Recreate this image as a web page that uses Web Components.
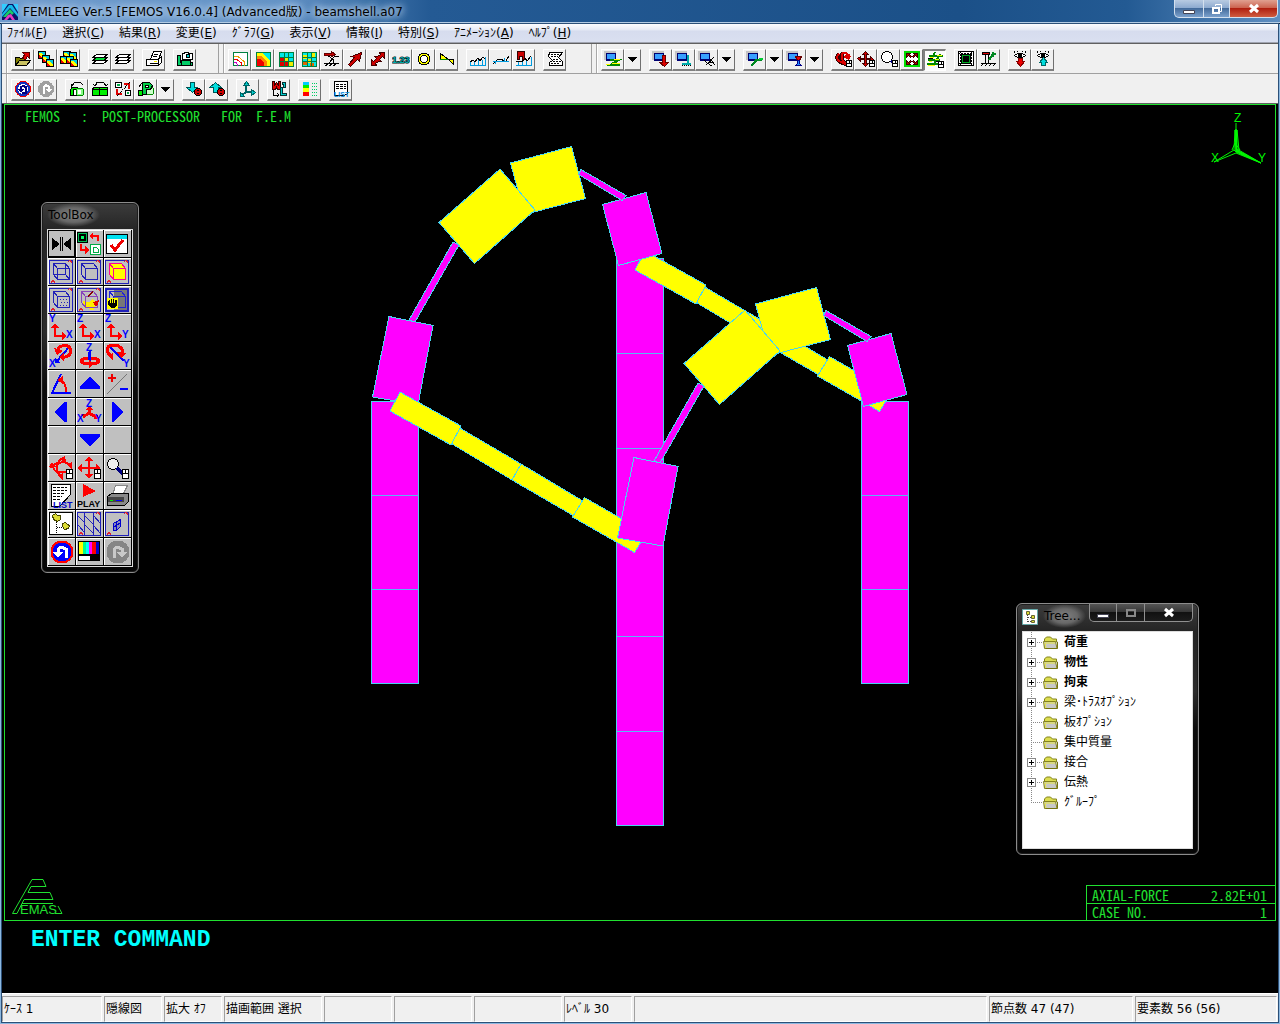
<!DOCTYPE html>
<html lang="ja">
<head>
<meta charset="utf-8">
<title>FEMLEEG Ver.5 [FEMOS V16.0.4] (Advanced版) - beamshell.a07</title>
<style>
  body {
    margin: 0;
    background: #000;
    font: 12px/16px "DejaVu Sans", "Noto Sans CJK JP", sans-serif;
    color: #000;
  }
</style>
</head>
<body>
<femos-app></femos-app>

<script>
// ---------- icon drawings ----------
const MONITOR = `<path fill="#c4c4c4" d="M0 0h12v9H0z"/><path fill="#000070" d="M2 2h10v8H2z"/><path fill="#38a0ff" d="M3 3h8v5H3z"/>`;
const MOUSE = `<path fill="#fff" stroke="#000" d="M12.5 9.5h5v6h-5zM12.5 12.5h5M15.5 9.5v3"/>`;
const CARD = `<path fill="#0cd" stroke="#000" d="M.5.5h7v7h-7z"/><path fill="#ff0" d="M1 2h2l4 4v1H1z"/><path fill="#e00" d="M1 4l3 3H1z"/>`;
const EYE = `<path fill="#fff" stroke="#000" d="M3.5 4.5l3-2h5l3 2-3 2h-5z"/><path fill="#000" d="M7 3h4v3H7zM3 0h1v2H3zM6 0h1v1H6zM11 0h1v1h-1zM14 0h1v2h-1z"/>`;
const GRID = `<path fill="#00e8e8" stroke="#008040" d="M2.5 1.5h14v14h-14z"/>`;
const GRIDLINES = `<path fill="none" stroke="#008040" d="M7.5 1v14M11.5 1v14M2 6.5h14M2 10.5h14"/>`;
const SHEETS = `<path stroke="#000" d="M1.5 12.5l4-3h11l-4 3z"/><path stroke="#000" d="M1.5 9.5l4-3h11l-4 3z"/><path stroke="#000" d="M1.5 6.5l4-3h11l-4 3z"/>`;

const ICONS = {
  open: `<path fill="#808000" stroke="#000" d="M1.5 14.5v-8h4l1 1h5v7z"/><path fill="#c8c060" stroke="#000" d="M1.5 14.5l4-5h11l-4 5z"/><path fill="#d00" stroke="#500" d="M8.5 7.5l2-4-2-2h7v6l-2-2-2 3z"/>`,
  cards: `<g transform="translate(1 0)">${CARD}</g><g transform="translate(5 4)">${CARD}</g><g transform="translate(9 8)">${CARD}</g>`,
  cardsAll: `<g transform="translate(3 0)">${CARD}</g><g transform="translate(9 1)">${CARD}</g><g transform="translate(0 5)">${CARD}</g><g transform="translate(6 5)">${CARD}</g><g transform="translate(10 8)">${CARD}</g>`,
  sheetGreen: `<g fill="#fff">${SHEETS}</g><path fill="#0d3" stroke="#000" d="M1.5 9.5l4-3h11l-4 3z"/>`,
  sheets: `<g fill="#fff">${SHEETS}</g>`,
  print: `<path fill="#fff" stroke="#000" d="M5.5 8.5l3-8h8l-3 8z"/><path fill="#fff" stroke="#000" d="M1.5 8.5h12v6h-12zM13.5 8.5l3-3v6l-3 3zM4.5 12.5h8"/><path stroke="#000" d="M9 3.5h4M8 5.5h4"/><path fill="#fe0" d="M9 10h3v1H9z"/>`,
  camera: `<path fill="#0c6" stroke="#000" d="M1.5 4.5h3v7h12v3h-15z"/><path fill="#0c6" stroke="#000" d="M5.5 9.5h9v5h-9z"/><path fill="#fff" stroke="#000" d="M6.5 2.5h2v-1h4v1h4v6h-10z"/><circle cx="12" cy="5" r="2" fill="#0cc" stroke="#000"/>`,
  contour: `<path fill="#fff" stroke="#008040" d="M2.5 1.5h14v13h-14z"/><path fill="none" stroke="#e8a000" d="M3 5.5h4l6 5v4"/><path fill="none" stroke="#e00" d="M3 8.5h3l4 3v3"/><path fill="none" stroke="#c0c" d="M3 11.5h2l2 3"/>`,
  contourFill: `${GRID}<path fill="#ff0" d="M3 2h5l8 8v5H3z"/><path fill="#f80" d="M3 5h4l6 6v4H3z"/><path fill="#e00" d="M3 8h3l4 4v3H3z"/>`,
  gridFill: `${GRID}<path fill="#d00" d="M3 7h4v8H3zM8 11h4v4H8z"/><path fill="#ee0" d="M8 7h4v4H8zM12 11h4v4h-4z"/>${GRIDLINES}`,
  gridNum: `${GRID}<path fill="#ee0" d="M3 4h4v4H3zM8 8h4v4H8zM12 2h3v4h-3z"/><path fill="#d60" d="M3 10h4v4H3zM10 12h4v3h-4z"/>${GRIDLINES}`,
  vecBase: `<path fill="none" stroke="#000" d="M1 12.5h15M2 15l3-2M6 15l3-2M10 15l3-2M6 12l6-7h4M5 4.5l5 4v4"/><path fill="#c00" stroke="#600" d="M1.5 2.5h7v-2l4 3-4 2v-1h-7z"/>`,
  arrow: `<path fill="#c00" stroke="#400" d="M2.5 13.5l6-7-3-1 10-4-2 9-2-2-7 7z"/>`,
  arrow2: `<path fill="#c00" stroke="#400" d="M15.5 1.5v6l-2-2-3 3 2 2h-3l-3 2 1 2h-5v-6l2 2 3-3-2-2h3l3-2-1-2z"/>`,
  num: `<text x="0" y="12" font-size="9" fill="#0aa" stroke="#000" stroke-width="1" paint-order="stroke">1.23</text>`,
  ring: `<circle cx="9" cy="8" r="6" fill="#ff0" stroke="#000"/><circle cx="9" cy="8" r="3.5" fill="#fff" stroke="#000"/>`,
  slope: `<path fill="#ff0" stroke="#000" d="M2.5 2.5v6h8z"/><path fill="none" stroke="#080" d="M2 8.5h14"/><path fill="#ff0" stroke="#000" d="M10.5 8.5h5v5z"/>`,
  wave: `<path fill="none" stroke="#009ce0" d="M1 14.5h16M1.5 14v-3M5.5 14v-4M9.5 14V9M13.5 14V9M16.5 14V6"/><path fill="none" stroke="#000" d="M1 11l3-2 2 2 3-4 2 3 3-4 2 2"/>`,
  curve: `<path fill="none" stroke="#000" d="M1 13l5-5h3l3 2h2l3-5"/><path fill="none" stroke="#009ce0" d="M1 10.5h16M3.5 13v-3M12.5 10V7"/>`,
  waveM: `<path fill="none" stroke="#009ce0" d="M1 14.5h16M3.5 14v-4M7.5 14v-4M11.5 14V9M16.5 14V6"/><path fill="none" stroke="#000" d="M1 11l3-1 3 1 3-4 2 3 4-5"/><path fill="#c00" stroke="#300" d="M2.5 8.5v-8h7v8h-2v-3h-3v3z"/>`,
  scroll: `<path fill="#fff" stroke="#000" d="M3.5 1.5h13l-4 5 4 4v4h-13v-3l3-2-4-4z"/><path stroke="#000" stroke-dasharray="2 1" d="M5 3.5h8M5 5.5h7M7 8.5h6M7 10.5h8M5 12.5h9"/>`,
  monZ: `${MONITOR}<path fill="none" stroke="#080" stroke-width="2" d="M6 9h9l-9 5h10"/><path fill="#ff0" d="M2 13h4v1H2zM8 12h8v1H8zM10 8h6v1h-6z"/>`,
  monRed: `${MONITOR}<path fill="#d00" stroke="#600" d="M10.5 4.5h3v7h3l-4 4-5-4h3z"/>`,
  monBase: `${MONITOR}<path stroke="#0aa" stroke-width="2" d="M13 4v9M7 13h9"/><path stroke="#000" stroke-dasharray="1 1" d="M7 14.5h10"/>`,
  monCut: `${MONITOR}<path fill="none" stroke="#000" d="M6 9l4 4 2-2M8 14l8-8M13 9l4 5M9 12l5 3M12 8v3h4"/>`,
  monY: `${MONITOR}<path fill="none" stroke="#082" stroke-width="2" d="M5 15l4-4 1-3M9 10l3-1h4"/><path fill="#0c3" d="M13 7h4v2h-4z"/>`,
  monHour: `${MONITOR}<path fill="#e00" stroke="#600" d="M9.5 5.5h6l-2 4h-2z"/><path fill="#28f" stroke="#008" d="M11.5 9.5h2v3l2 2h-6l2-2z"/>`,
  rotateM: `<path fill="none" stroke="#300" stroke-width="4" d="M5 3c-4 4-1 8 7 10M9 2c-3 4-1 8 3 11"/><path fill="none" stroke="#d00" stroke-width="2" d="M5 3c-4 4-1 8 7 10M9 2c-3 4-1 8 3 11M8 2h4l4 3"/><path fill="#d00" d="M9 6l4-3 4 2-2 4z"/>${MOUSE}`,
  panM: `<path fill="#c00" stroke="#400" d="M8.5.5l3 3h-2v4h4v-2l3 3-3 2v-2h-4v4h2l-3 3-3-3h2v-4h-4v2l-3-3 3-2v2h4v-4h-2z"/>${MOUSE}`,
  zoomM: `<circle cx="7" cy="6" r="5.5" fill="#fff" stroke="#000"/><path stroke="#000080" stroke-width="2" d="M11 10l4 4"/>${MOUSE}`,
  fit: `<path fill="#fff" stroke="#0d0" stroke-width="2" d="M2 1h14v14H2z"/><path fill="#a00" stroke="#300" d="M3.5 2.5h4l-1 1 2 2-1 1-2-2-2 2zM14.5 2.5v4l-2-2-2 2-1-1 2-2-1-1zM3.5 13.5v-4l2 2 2-2 1 1-2 2 1 1zM14.5 13.5h-4l1-1-2-2 1-1 2 2 2-2z"/>`,
  hatch: `<path stroke="#080" stroke-width="2" d="M3 4h14M2 8h12M1 12h11M9 0L5 8M14 2l-7 12"/><path stroke="#ff0" d="M4 5.5h4M11 3.5h5M3 9.5h3M9 7.5h4M2 13.5h7"/><path stroke="#000" d="M2 6.5h5M10 9.5h6"/>${MOUSE}`,
  target: `<path fill="#fff" stroke="#000" d="M1.5.5h15v14h-15z"/><path stroke="#000" stroke-dasharray="2 1" d="M1 2.5h16M1 12.5h16M3.5 0v15M14.5 0v15"/><path fill="#0a2" stroke="#000" d="M4.5 3.5h9v9h-9z"/><path d="M6 5h6v6H6z"/>`,
  support: `<path stroke="#000" d="M1 12.5h15M1 15l2-2M5 15l2-2M9 15l2-2M13 15l2-2M5.5 4v8M8.5 4v8M4 12.5h6"/><path fill="#d00" stroke="#000" d="M2.5 1.5h7v2h-7z"/><path fill="none" stroke="#082" stroke-width="2" d="M9 9l4-6h3M13 6V1"/>`,
  eyeDown: `${EYE}<path fill="#e00" stroke="#800" d="M7.5 7.5h4v3h2l-4 5-4-5h2z"/>`,
  eyeUp: `${EYE}<path fill="#0dd" stroke="#066" d="M9.5 6.5l4 5h-2v3h-4v-3h-2z"/>`,
  undo: `<circle cx="9" cy="8" r="8" fill="#e00"/><circle cx="9" cy="8" r="6" fill="#fff" stroke="#1030c0" stroke-width="2"/><path fill="none" stroke="#000080" stroke-width="2" d="M7 9V6l2-1 3 1v6H8"/><path fill="#000080" d="M4 8h6l-3 4z"/>`,
  redo: `<circle cx="9" cy="8" r="8" fill="#a0a0a0"/><path fill="none" stroke="#fff" stroke-width="2" d="M7 13V6l2-2 3 2v3"/><path fill="#fff" d="M9 8h6l-3 4z"/>`,
  turnG: `<path fill="none" stroke="#000" d="M4 5l3-4h5l3 3M3 3v3h3"/><path fill="#0e0" stroke="#000" d="M2.5 8.5l2-2h5v2h-4v6h-3z"/><path fill="#fff" stroke="#000" d="M5.5 8.5h3v6h-3z"/><circle cx="12" cy="11" r="4" fill="#8f8" stroke="#080"/><path fill="#fff" d="M10 9h3v4h-3z"/>`,
  turnGG: `<path fill="none" stroke="#000" d="M4 5l2-4h6l3 3M2 3l2 2 2-2M13 3l2 2 2-2"/><path fill="#0e0" stroke="#000" d="M1.5 8.5l1-2h14v8h-15zM8.5 7v8M2 8.5h14"/>`,
  swapCells: `<path fill="#fff" stroke="#000" d="M1.5 1.5h6v5h-6zM11.5 9.5h5v5h-5z"/><path fill="#0a4" d="M3 3h3v2H3zM13 11h2v2h-2z"/><path fill="none" stroke="#d00" stroke-width="2" d="M15 8V3h-5M3 8v5h5"/><path fill="none" stroke="#000" stroke-dasharray="1 1" d="M3 15L16 1"/>`,
  turnP: `<circle cx="13" cy="10" r="4" fill="#cfc" stroke="#080"/><path fill="#0c4" stroke="#000" d="M5.5 13.5v-12h7l3 3-2 4h-4v5z"/><path fill="#fff" stroke="#000" d="M8.5 4.5h3v2h-3z"/><path fill="#0e0" stroke="#000" d="M1.5 9.5h4v5h-4z"/><path fill="none" stroke="#000" d="M2 6l3-4"/>`,
  dropDown: `<path fill="#0dd" stroke="#055" d="M5.5 1.5h4v5h3l-5 5-6-5h4z"/><circle cx="13" cy="11" r="3.5" fill="#c00" stroke="#000"/><path fill="#000" d="M12 9h2v1h-2zM12 12h2v1h-2z"/>`,
  dropUp: `<path fill="#0dd" stroke="#055" d="M7.5 1.5l6 5h-3v5h-5v-5h-4z"/><circle cx="13" cy="11" r="3.5" fill="#c00" stroke="#000"/><path fill="#000" d="M12 9h2v1h-2zM12 12h2v1h-2z"/>`,
  axes: `<path fill="none" stroke="#066" stroke-width="2" d="M7 3v8h7M7 11l-4 3"/><path fill="#0cc" stroke="#066" d="M7.5.5l3 4h-6zM16.5 11.5l-4-3v6zM1.5 15.5v-4l4 4z"/>`,
  swapL: `<path fill="#d00" stroke="#300" d="M2.5.5h2v4l2-3 2 3v-4h2v8h-3l-1-2-1 2h-3z"/><path fill="#0cc" stroke="#033" d="M10.5 6.5h2v6h4v2h-6zM12.5 1.5h3v5h-2v-3h-1z"/><path fill="none" stroke="#000" d="M3.5 9v5h5M7 12l2 2-2 2"/>`,
  legend: `<path fill="#0cf" d="M2 1h6v3H2z"/><path fill="#0e0" d="M2 4h6v3H2z"/><path fill="#ff0" d="M2 7h6v4H2z"/><path fill="#f00" d="M2 11h6v4H2z"/><path stroke="#0c6" stroke-dasharray="1 1" d="M11 2.5h5M11 5.5h5M11 8.5h5M11 11.5h5M11 14.5h5"/>`,
  list: `<path fill="#fff" stroke="#000" d="M2.5.5h13v12l-3 2h-10z"/><path stroke="#000" stroke-dasharray="3 1" d="M4 3.5h10M4 5.5h10M4 7.5h10"/><text x="2" y="16" font-size="7" fill="#08d">LIST</text>`,
};

// frame that the view icons of the tool box share
const FRAME = `<path fill="none" stroke="#2020b8" d="M1.5 2.5h23v23h-23z"/><path fill="none" stroke="#e02030" d="M3 25l2-3 2 3M20 4l2-2 2 3"/>`;
const CUBE = `<path d="M9.5 10.5h12v11h-12zM9.5 10.5l-4-5h12l4 5M5.5 5.5v11l4 5"/>`;
const BOXMOUSE = `<path fill="#fff" stroke="#000" d="M18.5 15.5h6v9h-6zM18.5 19.5h6M21.5 15.5v4"/>`;
const L_ARROW = `<path fill="none" stroke="#f00" stroke-width="2" d="M7 12v10h9"/><path fill="#f00" d="M3 14l4-5 4 5zM14 18l5 4-5 4z"/>`;
const axisIcon = (a, b) => `${L_ARROW}<text x="1" y="8" font-size="10" fill="#00f">${a}</text><text x="18" y="24" font-size="10" fill="#00f">${b}</text>`;

const BOX_ICONS = {
  mirror: `<path fill="none" stroke="#000" d="M.5.5h26v26H.5z"/><path d="M4 8l8 6-8 6zM23 8l-8 6 8 6zM12 7h1v14h-1zM14 7h1v14h-1z"/>`,
  swap: `<path fill="#0b5" stroke="#000" stroke-width="1" d="M1.5 2.5h10v10h-10z"/><path d="M3 4h7v7H3z"/><path fill="#0f6" d="M5 6h3v3H5z"/><path fill="#fff" stroke="#0a4" d="M14.5 14.5h10v10h-10z"/><path fill="none" stroke="#0a4" d="M17.5 17.5h3l2 2v3h-5z"/><path fill="none" stroke="#f00" stroke-width="2" d="M22 11V6h-7M5 14v6h6"/><path fill="#f00" d="M13 6l4-4v8zM13 20l-4-4v8z"/>`,
  check: `<path fill="#fff" stroke="#000" d="M2.5 4.5h21v19h-21z"/><path fill="#00e0f0" d="M3 5h20v4H3z"/><path fill="none" stroke="#e00" stroke-width="3" d="M7 15l4 5 8-10"/>`,
  wire: `${FRAME}<g fill="none" stroke="#2020b8">${CUBE}<path d="M17.5 5.5v11h-12M17.5 16.5l4 5"/></g>`,
  hidden: `${FRAME}<g fill="none" stroke="#2020b8">${CUBE}</g>`,
  shaded: `<path fill="none" stroke="#2020b8" d="M1.5 2.5h23v23h-23z"/><path fill="#ff0" d="M5.5 5.5h12l4 5v11h-12l-4-5z"/><g fill="none" stroke="#f09">${CUBE}</g><path fill="none" stroke="#e02030" d="M3 25l2-3 2 3M20 4l2-2 2 3"/>`,
  dots: `${FRAME}<g fill="none" stroke="#2020b8">${CUBE}<path stroke-dasharray="1 2" d="M12 13.5h8M13 16.5h8M12 19.5h8"/></g>`,
  paint: `${FRAME}<path fill="#fe0" d="M7 15l6 1 3-3 4 4-2 7h-4l-2-3-4 1z"/><g fill="none" stroke="#84b">${CUBE}</g><path fill="#d00" d="M17 16l6-2-1 5-3 1z"/><path fill="#800" d="M11 10l5-5 1 1-5 5z"/>`,
  hand: `<path fill="#777" d="M10 2h15v23H10z"/><path fill="none" stroke="#2020b8" stroke-width="2" d="M2 3h22v22H2z"/><g fill="none" stroke="#2020d8">${CUBE}</g><path fill="#ff0" d="M3 12h11v11H3z"/><path d="M4 15l2-1v3h1v-4h1v4h1v-4h1v4h1v-3h2v5l-2 3H7l-3-4z"/>`,
  yx: axisIcon('Y', 'X'),
  zx: axisIcon('Z', 'X'),
  zy: axisIcon('Z', 'Y'),
  rotX: `<path stroke="#00f" stroke-width="2" d="M8 20L22 4"/><path fill="#00f" d="M7 21v-5l5 5z"/><path fill="none" stroke="#f00" stroke-width="3" d="M10 9c0-6 9-7 12-3 3 6-3 10-8 9"/><path fill="#f00" d="M6 6l3 7 6-4zM16 10v9l-5-4z"/><text x="1" y="25" font-size="10" fill="#00f">X</text>`,
  rotZ: `<path stroke="#00f" stroke-width="2" d="M14 9v13"/><ellipse cx="14" cy="19" rx="9" ry="3" fill="none" stroke="#f00" stroke-width="3"/><path fill="#00f" d="M12 10h3v8h-3z"/><path fill="#f00" d="M13 18l5 4-5 4z"/><text x="10" y="9" font-size="10" fill="#00f">Z</text>`,
  rotY: `<path stroke="#00f" stroke-width="2" d="M5 4l15 15"/><path fill="none" stroke="#f00" stroke-width="3" d="M9 15C1 11 2 3 9 3s12 5 9 10"/><path fill="#f00" d="M9 10v9l-4-4zM13 10l9 1-5 5z"/><text x="19" y="25" font-size="10" fill="#00f">Y</text>`,
  angle: `<path fill="none" stroke="#00f" stroke-width="2" d="M13 4L4 23h19"/><path fill="none" stroke="#f00" stroke-width="2" d="M12 10c4 1 6 5 6 12"/><path fill="#f00" d="M9 10l6-4v8z"/>`,
  up: `<path fill="#00f" d="M14 7l10 9v3H4v-3z"/>`,
  plusMinus: `<path stroke="#777" d="M3 24L23 4"/><path stroke="#e00" stroke-width="2" d="M4 8h8M8 4v8"/><path stroke="#00f" stroke-width="2" d="M16 19h8"/>`,
  left: `<path fill="#00f" d="M19 4v20h-3L7 14l9-10z"/>`,
  iso: `<path fill="none" stroke="#f00" stroke-width="3" d="M13 10v5M13 15l-6 4M13 15l7 4"/><path fill="#f00" d="M10 12l3-4 4 4zM4 16h5v5zM17 21l5-5v5z"/><g fill="#00f" font-size="10"><text x="10" y="9">Z</text><text x="1" y="24">X</text><text x="19" y="24">Y</text></g>`,
  right: `<path fill="#00f" d="M8 4v20h2l9-10-9-10z"/>`,
  blank: ``,
  down: `<path fill="#00f" d="M14 20L4 11V8h20v3z"/>`,
  blank2: ``,
  rotate: `<path fill="none" stroke="#f00" stroke-width="2" d="M3 14c3-6 16-8 20-2M15 4c-8 4-7 14-2 19M5 12c1 8 9 7 16 5"/><path fill="#f00" d="M11 5l6-3 1 6zM1 13l3-5 4 5zM18 10l6-2v7zM9 21l6-2v7z"/>${BOXMOUSE}`,
  pan: `<path fill="#f00" d="M13 2l4 5h-3v6h6v-3l5 4-5 4v-3h-6v5h3l-4 5-4-5h3v-5H6v3l-5-4 5-4v3h6V7H9z"/>${BOXMOUSE}`,
  zoom: `<circle cx="9" cy="10" r="5.5" fill="#eee" stroke="#000"/><path stroke="#000080" stroke-width="3" d="M13 14l7 7"/>${BOXMOUSE}`,
  list: `<path fill="#fff" stroke="#000" d="M3.5 2.5h19v10l-11 12h-8z"/><path stroke="#000" stroke-dasharray="3 1" d="M5 5.5h14M5 8.5h14M5 11.5h12M5 14.5h9M5 17.5h7"/><text x="5" y="26" font-size="9" fill="#00c">LIST</text>`,
  play: `<path fill="#f00" d="M7 2v13l13-6z"/><text x="1" y="25" font-size="9">PLAY</text>`,
  printer: `<path fill="#fff" stroke="#888" d="M8.5 13.5l3-10h12l-5 10z"/><path fill="#888" stroke="#000" d="M3.5 14.5l4-3h17v8l-4 4h-17z"/><path fill="#444" d="M4 15h16v5H4z"/><path fill="#0e0" d="M6 18h3v1H6z"/><path fill="#00f" d="M12 18h6v1h-6z"/>`,
  tree: `<path fill="#fff" stroke="#000" d="M1.5 2.5h23v22h-23z"/><path stroke="#000" stroke-dasharray="1 1" d="M8.5 10v14M9 17.5h5"/><path fill="#dd3" stroke="#440" d="M4.5 5.5l3-2 2 2h3v4l-3 2-4-2zM14.5 13.5l3-1 2 2 2 1-1 3-4 1-2-3z"/>`,
  mesh: `${FRAME}<path fill="none" stroke="#2020b8" d="M8.5 3v22M17.5 3v22M2 6l7 7M9 6l9 9M2 15l7 8M9 15l9 9M18 6l6 7M18 16l6 7"/>`,
  part: `${FRAME}<path fill="#88b" stroke="#00c" d="M9.5 13.5l7-4v7l-4 4h-3zM12.5 12v8M10 17l6-4"/>`,
  undo: `<circle cx="14" cy="14" r="10.5" fill="#00f" stroke="#f00" stroke-width="2"/><path fill="none" stroke="#fff" stroke-width="3" d="M10 16v-5l3-2 5 2v9"/><path fill="#fff" d="M5 14h10l-5 6z"/>`,
  palette: `<path d="M2 3h22v20H2z"/><path fill="#ff0" d="M3 4h4v12H3z"/><path fill="#0f8" d="M7 4h3v12H7z"/><path fill="#0ff" d="M10 4h3v12h-3z"/><path fill="#f0f" d="M13 4h3v12h-3z"/><path fill="#f00" d="M16 4h4v12h-4z"/><path fill="#00c" d="M20 4h3v12h-3z"/><path fill="#fff" d="M3 18h11v4H3z"/>`,
  redo: `<circle cx="14" cy="14" r="11.5" fill="#858585"/><path fill="none" stroke="#c8c8c8" stroke-width="3" d="M10 20v-9l3-2 5 2v5"/><path fill="#c8c8c8" d="M13 14h10l-5 6z"/>`,
};

// ---------- base class ----------
class ShadowElement extends HTMLElement {
  connectedCallback() {
    if (this.shadowRoot) return;
    const template = document.createElement('template');
    template.innerHTML = `<style>* { box-sizing: border-box; } ${this.styles()}</style>${this.markup()}`;
    this.attachShadow({mode: 'open'}).appendChild(template.content.cloneNode(true));
  }
  styles() { return ':host { display: block; }'; }
  markup() { return '<slot></slot>'; }
}

class TitleBar extends ShadowElement {
  styles() {
    return `
      :host {
        display: flex;
        align-items: flex-start;
        height: 24px;
        background: linear-gradient(90deg, #6f9bcd 0, #6493c6 280px, #245a94 430px, #1b5088 75%, #235a93 88%, #5f8fc2 100%);
        border-bottom: 1px solid #10243c;
        box-shadow: inset 0 -1px #b4cce4;
      }
      .logo { margin: 4px 5px 0 2px; flex: none; }
      h1 {
        margin: 3px 0 0;
        padding: 0 8px 0 0;
        font-size: 12px;
        line-height: 18px;
        font-weight: normal;
        flex: 1;
        text-shadow: 0 0 6px #c8dcf0, 0 0 8px #c8dcf0, 0 0 10px #a8c4e4;
        white-space: nowrap;
      }
    `;
  }
  markup() {
    return `
      <svg class="logo" width="16" height="16" viewBox="0 0 16 16" aria-hidden="true">
        <path fill="#0a1468" d="M0 0h16v16H0z"/>
        <path fill="#3cf" d="M0 0h6L0 9zM16 0h-5l5 8z"/>
        <path fill="#14b8e8" d="M7 1h3l6 9v3L8 4l-8 9v-3z"/>
        <path fill="#18c868" d="M5 8l3-3 4 4-2 2-2-2-4 4H1z"/>
        <path fill="#e838c0" d="M2 16l4-5 3-1 4 6h-3l-2-3-3 3z"/>
      </svg>
      <h1><slot></slot></h1>
      <window-buttons></window-buttons>
    `;
  }
}

class WindowButtons extends ShadowElement {
  styles() {
    return `
      :host { display: flex; flex: none; margin-right: 2px; }
      :host([dark]) { margin-right: 0; }
      button {
        height: 18px;
        padding: 0;
        border: 1px solid #d4e0ee;
        border-top: 0;
        border-left-width: 0;
        background: linear-gradient(#b8cbe2, #8eabd0 45%, #456c9c 50%, #7aa0cc);
        display: grid;
        place-items: center;
      }
      .min { width: 30px; border-left-width: 1px; border-bottom-left-radius: 5px; }
      .max { width: 26px; }
      .close { width: 48px; border-bottom-right-radius: 5px; background: linear-gradient(#e0a090, #cc6450 45%, #b02010 50%, #d05c40); }
      :host([dark]) button { border-color: #909090; background: linear-gradient(#555, #383838 45%, #111 50%, #1c1c1c); }
      :host([dark]) .min { width: 28px; }
      :host([dark]) .max { width: 28px; }
    `;
  }
  markup() {
    const restore = this.hasAttribute('dark')
      ? `<path fill="none" stroke="#888" stroke-width="2" d="M2 3h8v6H2z"/>`
      : `<path fill="none" stroke="#fff" stroke-width="2" d="M2 5h6v5H2z"/><path fill="none" stroke="#fff" d="M4.5 3V1.5h6v7H9"/>`;
    return `
      <button class="min" aria-label="最小化"><svg width="12" height="12"><path fill="#fff" stroke="#445" d="M.5 7.5h11v3H.5z"/></svg></button>
      <button class="max" aria-label="元に戻す"><svg width="12" height="12">${restore}</svg></button>
      <button class="close" aria-label="閉じる"><svg width="12" height="12"><path fill="none" stroke="#fff" stroke-width="3" d="M2 2l8 7M10 2L2 9"/></svg></button>
    `;
  }
}

class MenuBar extends ShadowElement {
  styles() {
    return `
      :host {
        display: flex;
        gap: 15px;
        height: 19px;
        padding: 0 5px;
        background: linear-gradient(#fbfcfe, #e8ecf6 30%, #d6dcee 40%, #d9dff0 90%);
        border-bottom: 1px solid #a0a4b0;
      }
    `;
  }
}

class MenuEntry extends ShadowElement {
  styles() {
    return `
      :host { display: block; }
      button { border: 0; padding: 0; background: none; font: inherit; line-height: 18px; color: inherit; white-space: nowrap; }
    `;
  }
  markup() { return `<button><slot></slot>(<u>${this.getAttribute('key')}</u>)</button>`; }
}

class ToolBand extends ShadowElement {
  styles() {
    return `
      :host {
        display: flex;
        align-items: center;
        gap: 8px;
        height: 30px;
        padding: 2px 22px 0 9px;
        background: #f0f0f0;
        border-right: 1px solid #a0a0a0;
        border-bottom: 1px solid #a0a0a0;
        box-shadow: inset 4px 0 #f0f0f0, inset 5px 0 #a8a8a8, inset 6px 0 #fff;
      }
      :host([wide]) { padding-right: 25px; }
      :host([grow]) { flex: 1; border-right: 0; }
      :host([last]) { border-bottom-color: #606060; }
    `;
  }
}

class ToolGroup extends ShadowElement {
  styles() { return ':host { display: flex; }'; }
  markup() {
    return this.getAttribute('icons').split(' ').map(name => {
      const [icon, flag] = name.split(':');
      return `<tool-button icon="${icon}" ${flag || ''}></tool-button>`;
    }).join('');
  }
}

class ToolButton extends ShadowElement {
  styles() {
    return `
      :host { display: flex; }
      button {
        width: 23px;
        height: 22px;
        padding: 0;
        display: grid;
        place-items: center;
        background: #f0f0f0;
        border: 1px solid #fff;
        border-right-color: #707070;
        border-bottom: 2px solid #808080;
      }
      .drop { width: 17px; }
      :host([pressed]) button { background: #fafafa; border: 1px solid #fff; border-left: 2px solid #808080; border-top: 2px solid #808080; }
      svg { display: block; shape-rendering: crispEdges; font-family: "Liberation Sans", sans-serif; font-weight: bold; }
    `;
  }
  markup() {
    const icon = this.getAttribute('icon');
    const drop = this.hasAttribute('menu')
      ? `<button class="drop" aria-label="${icon} menu"><svg width="9" height="5"><path d="M0 0h9L4.5 5z"/></svg></button>` : '';
    return `<button aria-label="${icon}"><svg width="18" height="16" viewBox="0 0 18 16">${ICONS[icon]}</svg></button>${drop}`;
  }
}

// floating window with the dark glass border
class GlassPanel extends ShadowElement {
  styles() {
    return `
      :host {
        display: flex;
        flex-direction: column;
        padding: 0 5px 5px;
        border: 1px solid #8c8c8c;
        border-radius: 6px;
        background: linear-gradient(#3c3c3c, #242424 28px, #2c2c2c 35%, #0c0c0c 50%, #060606);
        box-shadow: inset 0 0 0 1px #1c1c1c;
      }
      header { display: flex; height: var(--header, 26px); align-items: flex-start; }
      h2 {
        flex: 1;
        margin: 0;
        font-size: 12px;
        line-height: 24px;
        font-weight: normal;
        white-space: nowrap;
        color: #000;
      }
      h2 span {
        display: inline-block;
        padding: 0 6px 0 1px;
        background: radial-gradient(closest-side, #808080, #686868 60%, transparent);
      }
      .body { flex: 1; border: 1px solid #ddd; }
    `;
  }
  markup() {
    return `
      <header><slot name="icon"></slot><h2><span>${this.getAttribute('heading')}</span></h2><slot name="buttons"></slot></header>
      <div class="body"><slot></slot></div>
    `;
  }
}

class ToolBox extends ShadowElement {
  styles() {
    return `
      :host { display: grid; grid-template-columns: repeat(3, 28px); background: #000; }
      button {
        height: 28px;
        padding: 0;
        background: #c0c0c0;
        border: 0 solid #000;
        border-right-width: 1px;
        border-bottom-width: 1px;
        box-shadow: inset 1px 1px #fff;
      }
      svg { display: block; shape-rendering: crispEdges; font-family: "Liberation Sans", sans-serif; font-weight: bold; }
    `;
  }
  markup() {
    return Object.entries(BOX_ICONS).map(([name, art]) =>
      `<button aria-label="${name}"><svg width="27" height="27" viewBox="0 0 27 27">${art}</svg></button>`).join('');
  }
}

class TreeView extends ShadowElement {
  styles() { return ':host { display: block; background: #fff; height: 216px; } ul { list-style: none; margin: 0; padding: 0 0 0 3px; }'; }
  markup() { return '<ul role="tree"><slot></slot></ul>'; }
}

class TreeNode extends ShadowElement {
  styles() {
    return `
      :host { display: block; }
      li { display: flex; align-items: center; height: 20px; }
      .line {
        width: 17px;
        height: 20px;
        display: flex;
        align-items: center;
        background:
          repeating-linear-gradient(90deg, #888 0 1px, transparent 1px 2px) 5px 10px / 12px 1px no-repeat,
          repeating-linear-gradient(#888 0 1px, transparent 1px 2px) 5px 0 / 1px 20px no-repeat;
      }
      :host(:last-of-type) .line {
        background:
          repeating-linear-gradient(90deg, #888 0 1px, transparent 1px 2px) 5px 10px / 12px 1px no-repeat,
          repeating-linear-gradient(#888 0 1px, transparent 1px 2px) 5px 0 / 1px 10px no-repeat;
      }
      button { width: 9px; height: 9px; padding: 0; margin-left: 1px; border: 1px solid #888; background: #fff; }
      button svg, .folder { display: block; }
      .folder { margin: 1px 5px 0 0; }
      span { white-space: nowrap; }
      :host([bold]) span { font-weight: bold; }
    `;
  }
  markup() {
    const toggle = this.hasAttribute('leaf') ? '' : `<button aria-label="展開"><svg width="7" height="7"><path stroke="#000" d="M1 3.5h5M3.5 1v5"/></svg></button>`;
    return `
      <li role="treeitem">
        <div class="line">${toggle}</div>
        <svg class="folder" width="16" height="14" viewBox="0 0 16 14" aria-hidden="true">
          <path fill="#dcdc50" stroke="#84841c" d="M1.5 12V3l2-2h4l2 2h4v3"/>
          <path fill="#c8c8c8" stroke="#84841c" d="M1.5 12.5l-1-7h12l1.5 7z"/>
          <path fill="none" stroke="#e8e840" d="M3 12L2 7h10"/>
          <path fill="none" stroke="#747410" d="M13.5 6h1v6.5H3"/>
        </svg>
        <span><slot></slot></span>
      </li>
    `;
  }
}

// structure plot: the arch and the cross beam are each drawn twice, shifted to the other bay
class ModelView extends ShadowElement {
  styles() {
    return `
      :host { display: block; }
      svg { display: block; width: 100%; height: 100%; }
      .m { fill: #f0f; }
      .y { fill: #ff0; }
      .model { stroke: #48d4f0; stroke-width: 1; shape-rendering: crispEdges; }
      .divider { fill: #58b8f4; stroke: none; }
      .triad { fill: none; stroke: #00f800; }
      .triad text { fill: #00f800; stroke: none; font: 12px "Liberation Sans", sans-serif; }
    `;
  }
  markup() {
    const column = (x, y, h, cuts) =>
      `<rect class="m" x="${x}" y="${y}" width="47" height="${h}"/>` +
      cuts.map(c => `<rect class="divider" x="${x}" y="${c}" width="47" height="1"/>`).join('');
    const arch = `
      <path class="m" d="M453 242l6 3-44 77-6-2z"/>
      <path class="m" d="M389 316.5l44 9-15 79.5-45.5-8z"/>
      <path class="y" d="M510.5 163l61-16.5 14 52-61 16z"/>
      <path class="y" d="M500 169l35 41-60.5 53.5-35.5-41z"/>
      <path class="m" d="M602.5 204.5l43.5-12 16 61-43.5 12z"/>
      <path class="m" d="M581 169.5l45 26-4 5-43.5-26z"/>
    `;
    const beam = `
      <path class="y" d="M703 286l63 37-9 16-60-36z"/>
      <path class="y" d="M766 323l62 37-9 15-62-36z"/>
      <path class="y" d="M645 251l61 34-10 19-61-34z"/>
      <path class="y" d="M829.5 356.5l62 35.5-12 19.5-62-35.5z"/>
    `;
    return `
      <svg viewBox="5 105 1270 815" role="img" aria-label="beamshell">
        <g class="model">
          ${column(371.5, 401.5, 282, [495, 589])}
          ${column(616.5, 258.5, 284, [353, 448])}
          ${column(616.5, 542.5, 283, [636, 731])}
          ${column(861.5, 401.5, 282, [495, 589])}
          ${beam}
          ${arch}
          <g transform="translate(-245 141)">${beam}</g>
          <g transform="translate(245 141)">${arch}</g>
        </g>
        <g class="triad">
          <path d="M1236 123v28M1235 130l-1 20 2 2 3-2-2-20zM1234 150l-20 12 22-9 25 10-24-14M1232 150l3-7 5 7"/>
          <path fill="#00f800" d="M1235 130h2v20l24 13-25-11z"/>
          <text x="1234" y="122">Z</text><text x="1211" y="162">X</text><text x="1258" y="162">Y</text>
        </g>
      </svg>
    `;
  }
}

class FemasLogo extends ShadowElement {
  styles() {
    return `
      :host { display: block; }
      svg { display: block; fill: none; stroke: #20e030; }
      text { fill: #20e030; stroke: none; font: 13px "Liberation Sans", sans-serif; }
    `;
  }
  markup() {
    return `
      <svg width="52" height="38" viewBox="0 0 52 38" role="img" aria-label="FEMAS">
        <path d="M.5 35.5L20 1.5h11l3 7H19l-3 6h22l3 7H12L5 35.5z"/>
        <path d="M10 25.5h31M46 28l4 7.5h-7"/>
        <text x="8" y="36">EMAS</text>
      </svg>
    `;
  }
}

class ResultTable extends ShadowElement {
  styles() {
    return `
      :host { display: block; }
      table { width: 190px; border-collapse: collapse; border: 1px solid #20e030; background: #000; }
      tr { height: 17px; border-bottom: 1px solid #20e030; }
      tr:first-child { height: 18px; }
      th, td { padding: 0 8px 0 5px; line-height: 16px; font-weight: normal; text-align: left; white-space: nowrap; }
      td { text-align: right; }
    `;
  }
  markup() {
    return `
      <table>
        <tr><th scope="row">AXIAL-FORCE</th><td>2.82E+01</td></tr>
        <tr><th scope="row">CASE NO.</th><td>1</td></tr>
      </table>
    `;
  }
}

class PlotScreen extends ShadowElement {
  styles() {
    return `
      :host { display: flex; flex-direction: column; position: relative; background: #000; padding: 0 2px; }
      .frame { flex: 1; min-height: 0; position: relative; border: 1px solid #20e030; color: #20e030; font: 14px/16px "Noto Sans CJK JP", monospace; font-feature-settings: "hwid"; }
      model-view { position: absolute; inset: 0; }
      .caption { position: absolute; top: 3px; left: 20px; white-space: pre; }
      femas-logo { position: absolute; left: 7px; bottom: 4px; }
      result-table { position: absolute; right: -1px; bottom: -1px; }
      .prompt { height: 72px; padding: 6px 27px; font: bold 23px/26px "Liberation Mono", monospace; color: #0ff; }
      .toolbox { position: absolute; left: 39px; top: 98px; }
      .tree { --header: 27px; position: absolute; right: 79px; top: 499px; width: 183px; }
      .tree-icon { margin: 5px 5px 0 0; }
    `;
  }
  markup() {
    return `
      <div class="frame">
        <model-view></model-view>
        <div class="caption">FEMOS   :  POST-PROCESSOR   FOR  F.E.M</div>
        <femas-logo></femas-logo>
        <result-table></result-table>
      </div>
      <div class="prompt">ENTER COMMAND</div>
      <glass-panel class="toolbox" heading="ToolBox"><tool-box></tool-box></glass-panel>
      <glass-panel class="tree" heading="Tree...">
        <svg class="tree-icon" slot="icon" width="16" height="16" viewBox="0 0 16 16" aria-hidden="true">
          <path fill="#fff" stroke="#6aa" d="M.5.5h15v15H.5z"/>
          <path fill="#dd3" stroke="#663" d="M4.5 2.5h3v3h-3zM9.5 6.5h3v3h-3zM9.5 11.5h3v2h-3z"/>
          <path stroke="#444" stroke-dasharray="1 1" d="M5.5 6v7M6 8.5h3M6 12.5h3"/>
        </svg>
        <window-buttons slot="buttons" dark></window-buttons>
        <tree-view>
          <tree-node bold>荷重</tree-node>
          <tree-node bold>物性</tree-node>
          <tree-node bold>拘束</tree-node>
          <tree-node>梁･ﾄﾗｽｵﾌﾟｼｮﾝ</tree-node>
          <tree-node leaf>板ｵﾌﾟｼｮﾝ</tree-node>
          <tree-node leaf>集中質量</tree-node>
          <tree-node>接合</tree-node>
          <tree-node>伝熱</tree-node>
          <tree-node leaf>ｸﾞﾙｰﾌﾟ</tree-node>
        </tree-view>
      </glass-panel>
    `;
  }
}

class StatusBar extends ShadowElement {
  styles() {
    return `
      :host {
        display: grid;
        grid-template-columns: 100px 58px 58px 98px 68px 78px 88px 68px 1fr 144px 142px;
        gap: 2px;
        height: 29px;
        padding: 2px 1px 1px 0;
        background: #f0f0f0;
        border-top: 1px solid #fff;
      }
      ::slotted(span) {
        padding-left: 1px;
        line-height: 24px;
        white-space: nowrap;
        border: 1px solid #fff;
        border-top-color: #a0a0a0;
        border-left-color: #a0a0a0;
      }
    `;
  }
}

class FemosApp extends ShadowElement {
  styles() {
    return `
      :host {
        display: flex;
        flex-direction: column;
        min-height: 100vh;
        box-sizing: border-box;
        background: #8cb8e0;
      }
      .client {
        flex: 1;
        display: flex;
        flex-direction: column;
        margin: 0 2px 2px;
        box-shadow: 0 0 0 1px #2c5078;
      }
      .bands { display: flex; border-top: 1px solid #606060; background: #f0f0f0; }
      .bands + .bands { border-top: 0; }
      plot-screen { flex: 1; }
    `;
  }
  markup() {
    return `
      <title-bar>FEMLEEG Ver.5 [FEMOS V16.0.4] (Advanced版) - beamshell.a07</title-bar>
      <div class="client">
        <menu-bar>
          <menu-entry key="F">ﾌｧｲﾙ</menu-entry>
          <menu-entry key="C">選択</menu-entry>
          <menu-entry key="R">結果</menu-entry>
          <menu-entry key="E">変更</menu-entry>
          <menu-entry key="G">ｸﾞﾗﾌ</menu-entry>
          <menu-entry key="V">表示</menu-entry>
          <menu-entry key="I">情報</menu-entry>
          <menu-entry key="S">特別</menu-entry>
          <menu-entry key="A">ｱﾆﾒｰｼｮﾝ</menu-entry>
          <menu-entry key="H">ﾍﾙﾌﾟ</menu-entry>
        </menu-bar>
        <div class="bands">
          <tool-band>
            <tool-group icons="open cards cardsAll"></tool-group>
            <tool-group icons="sheetGreen sheets"></tool-group>
            <tool-group icons="print"></tool-group>
            <tool-group icons="camera"></tool-group>
          </tool-band>
          <tool-band wide>
            <tool-group icons="contour contourFill gridFill gridNum vecBase arrow arrow2 num ring slope"></tool-group>
            <tool-group icons="wave curve waveM"></tool-group>
            <tool-group icons="scroll"></tool-group>
          </tool-band>
          <tool-band grow>
            <tool-group icons="monZ:menu"></tool-group>
            <tool-group icons="monRed monBase monCut:menu"></tool-group>
            <tool-group icons="monY:menu monHour:menu"></tool-group>
            <tool-group icons="rotateM panM zoomM fit hatch:pressed"></tool-group>
            <tool-group icons="target support"></tool-group>
            <tool-group icons="eyeDown eyeUp"></tool-group>
          </tool-band>
        </div>
        <div class="bands">
          <tool-band grow last>
            <tool-group icons="undo redo"></tool-group>
            <tool-group icons="turnG turnGG swapCells turnP:menu"></tool-group>
            <tool-group icons="dropDown dropUp"></tool-group>
            <tool-group icons="axes"></tool-group>
            <tool-group icons="swapL"></tool-group>
            <tool-group icons="legend"></tool-group>
            <tool-group icons="list"></tool-group>
          </tool-band>
        </div>
        <plot-screen></plot-screen>
        <status-bar>
          <span>ｹｰｽ 1</span><span>隠線図</span><span>拡大 ｵﾌ</span><span>描画範囲 選択</span>
          <span></span><span></span><span></span><span>ﾚﾍﾞﾙ 30</span><span></span>
          <span>節点数 47 (47)</span><span>要素数 56 (56)</span>
        </status-bar>
      </div>
    `;
  }
}

customElements.define('title-bar', TitleBar);
customElements.define('window-buttons', WindowButtons);
customElements.define('menu-bar', MenuBar);
customElements.define('menu-entry', MenuEntry);
customElements.define('tool-button', ToolButton);
customElements.define('tool-group', ToolGroup);
customElements.define('tool-band', ToolBand);
customElements.define('glass-panel', GlassPanel);
customElements.define('tool-box', ToolBox);
customElements.define('tree-node', TreeNode);
customElements.define('tree-view', TreeView);
customElements.define('model-view', ModelView);
customElements.define('femas-logo', FemasLogo);
customElements.define('result-table', ResultTable);
customElements.define('plot-screen', PlotScreen);
customElements.define('status-bar', StatusBar);
customElements.define('femos-app', FemosApp);
</script>
</body>
</html>
